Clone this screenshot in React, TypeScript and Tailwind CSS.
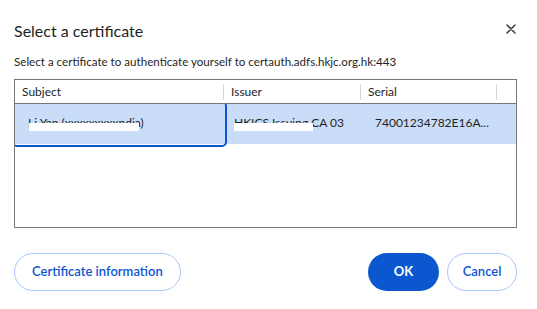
import React from "react";

const font = { fontFamily: 'Lato, "Noto Sans", sans-serif' };

const CloseIcon = () => (
    <svg width="10" height="10" viewBox="0 0 10 10" className="text-[#444746]">
        <path d="M1 1 L9 9 M9 1 L1 9" stroke="currentColor" strokeWidth="1.6" strokeLinecap="round" />
    </svg>
);

const HeaderCell = ({ label, width, divider = true }: { label: string; width?: string; divider?: boolean }) => (
    <div className={`flex h-full items-center ${width ?? "flex-1"}`}>
        <span className="pl-[7px] text-[12px] text-[#1f1f1f]">{label}</span>
        {divider && <div className="ml-auto h-[16px] w-px bg-[#d5d5d5]" />}
    </div>
);

const App = () => {
    return (
        <div className="relative h-[309px] w-[537px] overflow-hidden bg-white" style={font}>
            <div className="flex flex-col pl-[14px] pr-[20px]">
                <div className="flex h-[43px] items-end justify-between pb-[2px]">
                    <h1 className="text-[16px] leading-[20px] text-[#1f1f1f]">Select a certificate</h1>
                    <div className="mb-[7px] mr-[1px]">
                        <CloseIcon />
                    </div>
                </div>
                <p className="mt-[11px] text-[11.6px] leading-[16px] text-[#1f1f1f]">
                    Select a certificate to authenticate yourself to certauth.adfs.hkjc.org.hk:443
                </p>

                <div className="mt-[9px] flex h-[149px] flex-col border border-[#767676]">
                    <div className="flex h-[24px] shrink-0 border-b border-[#767676]">
                        <HeaderCell label="Subject" width="w-[209px]" />
                        <HeaderCell label="Issuer" width="w-[137px]" />
                        <HeaderCell label="Serial" width="w-[136px]" />
                        <HeaderCell label="" divider={false} />
                    </div>
                    <div className="relative flex-1 overflow-hidden">
                        <div className="flex h-[40px] bg-[#c9ddf9] text-[12px] text-[#1f1f1f]">
                            <div className="relative w-[209px] rounded-[2px] pl-[13px] pt-[10px] outline-2 outline-offset-1 outline-[#0b57d0]">
                                <span>Li Yan (xxxxxxxxxndia)</span>
                                <div className="absolute left-[14px] top-[19px] h-[8px] w-[110px] bg-white" />
                            </div>
                            <div className="relative w-[137px] pl-[10px] pt-[10px]">
                                <span>HKICS Issuing CA 03</span>
                                <div className="absolute left-[10px] top-[19px] h-[8px] w-[79px] bg-white" />
                            </div>
                            <div className="w-[136px] pl-[14px] pt-[10px]">
                                <span>74001234782E16A...</span>
                            </div>
                            <div className="flex-1" />
                        </div>
                    </div>
                </div>

                <div className="mt-[25px] flex items-center justify-between">
                    <button className="h-[38px] rounded-full border border-[#a8c7fa] px-[17px] text-[13px] font-semibold text-[#0b57d0]">
                        Certificate information
                    </button>
                    <div className="flex gap-[8px]">
                        <button className="h-[38px] w-[71px] rounded-full bg-[#0b57d0] text-[13px] font-bold text-white">
                            OK
                        </button>
                        <button className="h-[38px] w-[70px] rounded-full border border-[#a8c7fa] text-[13px] font-semibold text-[#0b57d0]">
                            Cancel
                        </button>
                    </div>
                </div>
            </div>
        </div>
    );
};

export default App;
